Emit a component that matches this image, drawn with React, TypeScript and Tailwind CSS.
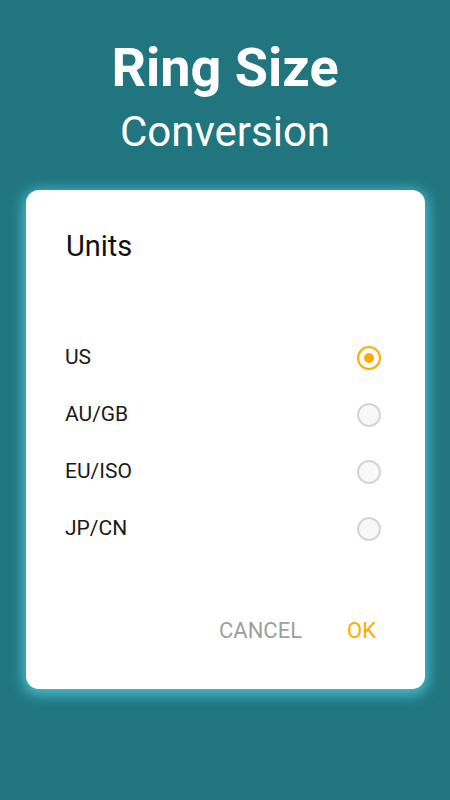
import React from "react";

const options = ["US", "AU/GB", "EU/ISO", "JP/CN"];

export default function App() {
  return (
    <div
      className="w-[450px] h-[800px] bg-[#20757f] flex flex-col items-center overflow-hidden"
      style={{ fontFamily: "Roboto, 'Noto Sans', sans-serif" }}
    >
      <div className="text-white font-bold text-[54px] leading-none mt-[41px]">Ring Size</div>
      <div className="text-white text-[42px] leading-none mt-[16px]">Conversion</div>
      <div className="mt-[37px] w-[399px] h-[499px] ml-[1px] bg-white rounded-[13px] shadow-[0_3px_14px_3px_rgba(90,215,235,0.75)] flex flex-col">
        <div className="pl-[40px] pt-[42px] text-[29px] leading-none text-[#111]">Units</div>
        <div className="mt-[68px] flex flex-col">
          {options.map((o, i) => (
            <div key={o} className="h-[57px] flex items-center justify-between pl-[39px] pr-[44px]">
              <span className="text-[21px] leading-none text-[#1a1a1a]">{o}</span>
              {i === 0 ? (
                <div className="w-[24px] h-[24px] rounded-full border-2 border-[#ffab00] flex items-center justify-center">
                  <div className="w-[10px] h-[10px] rounded-full bg-[#ffab00]" />
                </div>
              ) : (
                <div className="w-[24px] h-[24px] rounded-full border-2 border-[#d4d4d4] bg-[#f8f8f8]" />
              )}
            </div>
          ))}
        </div>
        <div className="mt-[63px] flex justify-end items-center pr-[49px] gap-[45px]">
          <span className="text-[22px] leading-none text-[#9e9e9e]">CANCEL</span>
          <span className="text-[22px] leading-none text-[#ffab00]">OK</span>
        </div>
      </div>
    </div>
  );
}
